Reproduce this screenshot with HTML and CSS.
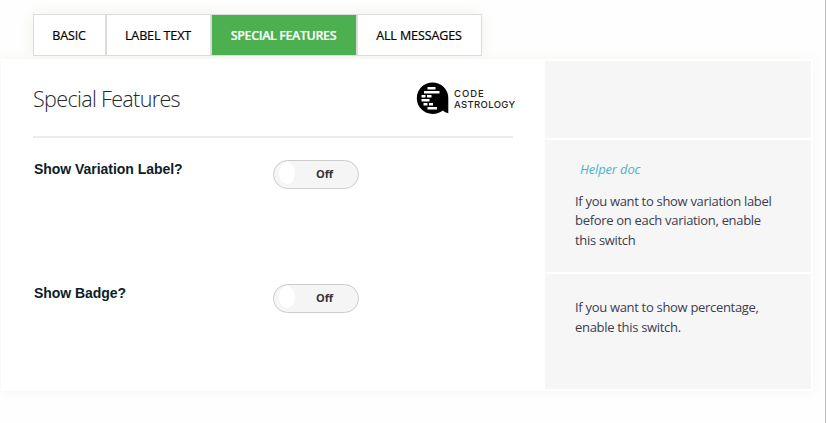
FILE: index.html
```
<!DOCTYPE html>
<html lang="en">
<head>
<meta charset="utf-8">
<title>Special Features</title>
<link rel="stylesheet" href="styles.css">
</head>
<body>
<main class="page">
  <nav class="tabs">
    <a class="tab tab-basic"><span>BASIC</span></a>
    <a class="tab tab-label"><span>LABEL TEXT</span></a>
    <a class="tab tab-special active"><span>SPECIAL FEATURES</span></a>
    <a class="tab tab-messages"><span>ALL MESSAGES</span></a>
  </nav>
  <section class="card">
    <div class="main head">
      <header class="title-row">
        <h1><span>Special Features</span></h1>
        <div class="logo">
          <svg class="logo-mark" width="33" height="33" viewBox="0 0 33 33">
            <path d="M16.500 .5A15.700 15.700 0 1 0 16.500 31.900Q22.500 31.900 26.800 28.500Q29 30.500 32.300 31.300V16A15.800 15.500 0 0 0 16.500 .5Z" fill="#000"/>
            <path d="M11.500 5h8v2.400h-8zM8 9h15.500v2.400H8zM5.500 13h4v2.400h-4zM11 13h4.500v2.400H11zM5.500 17h8v2.400h-8zM7.500 21h4v2.400h-4zM13 21h4v2.400h-4zM11.500 25h9.500v2.400h-9.500z" fill="#fff"/>
          </svg>
          <div class="logo-text"><span class="l1">CODE</span><span class="l2">ASTROLOGY</span></div>
        </div>
      </header>
    </div>
    <aside class="help"></aside>
    <div class="main option">
      <label>Show Variation Label?</label>
      <button class="switch"><i></i><span>Off</span></button>
    </div>
    <aside class="help">
      <a class="doc">Helper doc</a>
      <p class="p1">If you want to show variation label<br>before on each variation, enable<br>this switch</p>
    </aside>
    <div class="main option second">
      <label>Show Badge?</label>
      <button class="switch"><i></i><span>Off</span></button>
    </div>
    <aside class="help last">
      <p class="p2">If you want to show percentage,<br>enable this switch.</p>
    </aside>
  </section>
</main>
</body>
</html>
```
FILE: styles.css
```
* { box-sizing: border-box; }
body { margin: 0; background: #fefefe; font-family: "Open Sans", "Noto Sans", sans-serif; color: #3c3c50; }
.page { height: 423px; padding: 14px 0 0 1px; border-right: 1px solid #bcbcbc; overflow: hidden; }
.tabs { display: flex; width: 449px; height: 42px; margin-left: 32px; box-shadow: 0 0 15px #f0f0ea; }
.tab { position: relative; z-index: 1; display: flex; align-items: center; justify-content: center; padding-right: 1px; border: 1px solid #dcdcdc; background: #fff; color: #000; font-size: 12.500px; font-weight: 500; white-space: nowrap; -webkit-text-stroke: .2px currentColor; }
.tab-basic { width: 73px; letter-spacing: -.15px; }
.tab-label { width: 105px; letter-spacing: -.1px; }
.tab-special { width: 146px; letter-spacing: -.4px; }
.tab-messages { width: 125px; letter-spacing: -.1px; }
.tab.active { background: #4caf50; color: #fff; font-weight: 600; }
.card { display: grid; grid-template-columns: 540px 266px; grid-template-rows: 77px 132px 115px; gap: 2px; width: 812px; height: 332px; margin-top: 3px; padding: 2px; background: #fff; box-shadow: 0 0 13px #f5f5f2; }
.main { padding-left: 30px; }
.title-row { display: flex; justify-content: space-between; width: 480px; height: 77px; border-bottom: 2px solid #ebebeb; }
h1 { margin: 23px 0 0; font-size: 21.500px; line-height: 30px; font-weight: 300; color: #23282d; white-space: nowrap; letter-spacing: -.65px; }
.logo { display: flex; width: 101px; height: 33px; margin: 21px -4px 0 0; flex: none; }
.logo-mark { flex: none; }
.logo-text { margin: 6px 0 0 5px; font-family: Inter, sans-serif; font-size: 9.500px; line-height: 11px; font-weight: 500; color: #222; }
.logo-text span { display: block; white-space: nowrap; }
.l1 { letter-spacing: .95px; }
.l2 { letter-spacing: .35px; }
.option { display: flex; align-items: flex-start; padding: 20px 0 0 31px; }
.option.second { padding-top: 10px; }
label { width: 239px; font: bold 14px/18px "Liberation Sans", sans-serif; letter-spacing: -.04px; color: #0c1d28; }
.switch { display: flex; align-items: center; width: 86px; height: 29px; padding: 0 0 0 5px; border: 1px solid #ccc; border-radius: 15px; background: #f5f5f5; font: bold 11px "Open Sans", sans-serif; color: #333; }
.switch i { width: 16px; height: 22px; margin-top: -3px; border-radius: 50%; background: #fff; }
.switch span { margin: -2px 0 0 21px; letter-spacing: -.1px; }
.help { padding: 19px 0 0 30px; background: #f6f6f6; font-size: 13px; line-height: 20px; }
.help p { margin: 12.500px 0 0; line-height: 19.500px; white-space: nowrap; letter-spacing: -.31px; }
.help.last { padding-top: 23px; }
.help.last p { margin: 0; line-height: 20px; }
.doc { display: block; margin-left: 5px; color: #48b5c9; font-style: italic; letter-spacing: -.15px; }
```
